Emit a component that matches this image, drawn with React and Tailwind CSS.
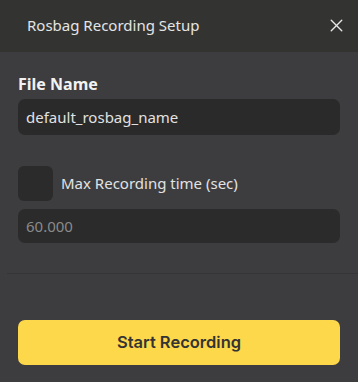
import { X } from 'lucide-react';

const App = () => {
	return (
		<div className="w-[358px] h-[382px] bg-[#3d3d3f] flex flex-col overflow-hidden" style={{ fontFamily: '"Noto Sans", "Open Sans", sans-serif' }}>
			{/* Header */}
			<div className="h-[52px] shrink-0 bg-[#333432] flex items-center justify-between pl-[27px] pr-[11px]">
				<span className="text-[15px] text-[#e4e4e4] -mt-[2px]">Rosbag Recording Setup</span>
				<X size={21} strokeWidth={1.6} className="text-[#e8e8e8] -mt-[2px]" />
			</div>

			{/* Body */}
			<div className="flex flex-col px-[18px] pt-[20px]">
				<label className="text-[16px] font-bold leading-[24px] text-[#f2f2f2]">File Name</label>
				<div className="mt-[3px] h-[36px] rounded-[7px] bg-[#2a2a2a] flex items-center px-[8px] text-[15px] text-[#e2e2e2]">
					default_rosbag_name
				</div>

				<div className="mt-[31px] flex items-center gap-[8px]">
					<div className="w-[35px] h-[35px] rounded-[6px] bg-[#2b2b2b]" />
					<span className="text-[15px] text-[#e2e2e2]">Max Recording time (sec)</span>
				</div>

				<div className="mt-[8px] h-[34px] rounded-[7px] bg-[#2b2b2b] flex items-center px-[8px] text-[15px] text-[#8a8a8a]">
					60.000
				</div>
			</div>

			<div className="mt-[30px] ml-[7px] h-px bg-[#353537]" />

			<div className="px-[18px] mt-[46px]">
				<button className="w-full h-[45px] rounded-[7px] bg-[#fdd84a] text-[16.5px] font-semibold text-[#343434]" style={{ fontFamily: 'Inter, sans-serif' }}>
					Start Recording
				</button>
			</div>
		</div>
	);
};

export default App;
